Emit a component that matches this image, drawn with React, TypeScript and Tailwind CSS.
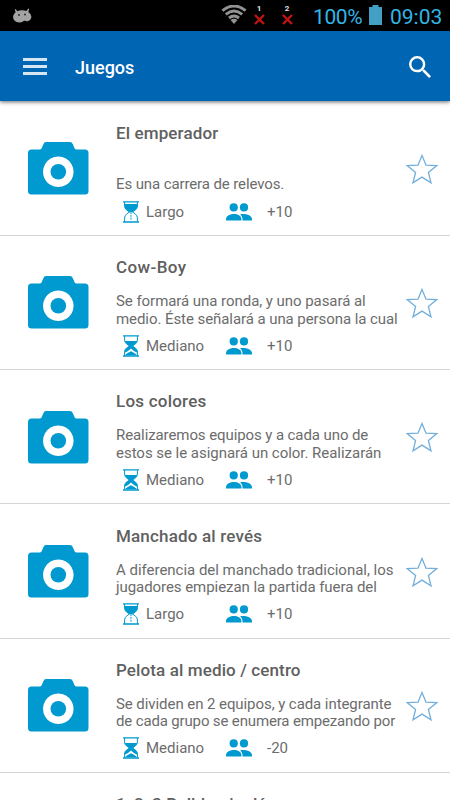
type Game = {
  title: string;
  titleSpacing: string;
  lines: { text: string; spacing: string }[];
  duration: string;
  players: string;
};

const games: Game[] = [
  { title: "El emperador", titleSpacing: "tracking-[0.120px]", lines: [{ text: "Es una carrera de relevos.", spacing: "tracking-[-0.110px]" }], duration: "Largo", players: "+10" },
  {
    title: "Cow-Boy",
    titleSpacing: "tracking-[0.400px]",
    lines: [
      { text: "Se formará una ronda, y uno pasará al", spacing: "tracking-[-0.050px]" },
      { text: "medio. Éste señalará a una persona la cual", spacing: "tracking-[-0.070px]" },
    ],
    duration: "Mediano",
    players: "+10",
  },
  {
    title: "Los colores",
    titleSpacing: "tracking-[0.220px]",
    lines: [
      { text: "Realizaremos equipos y a cada uno de", spacing: "tracking-[-0.090px]" },
      { text: "estos se le asignará un color. Realizarán", spacing: "tracking-[-0.030px]" },
    ],
    duration: "Mediano",
    players: "+10",
  },
  {
    title: "Manchado al revés",
    titleSpacing: "tracking-[0.170px]",
    lines: [
      { text: "A diferencia del manchado tradicional, los", spacing: "tracking-[-0.020px]" },
      { text: "jugadores empiezan la partida fuera del", spacing: "tracking-[-0.060px]" },
    ],
    duration: "Largo",
    players: "+10",
  },
  {
    title: "Pelota al medio / centro",
    titleSpacing: "tracking-[0.120px]",
    lines: [
      { text: "Se dividen en 2 equipos, y cada integrante", spacing: "tracking-[-0.070px]" },
      { text: "de cada grupo se enumera empezando por", spacing: "tracking-[-0.150px]" },
    ],
    duration: "Mediano",
    players: "-20",
  },
  { title: "1, 2, 3 Bulldog inglés", titleSpacing: "tracking-[0.120px]", lines: [], duration: "Largo", players: "+10" },
];

function Camera() {
  return (
    <svg className="block h-[54px] w-[61px]" viewBox="0 0 61 54" fill="#0099d0">
      <path
        fillRule="evenodd"
        d="M18 1h24q2 0 2.700 2l2 4.600q.5 1 2 1H57q3.500 0 3.500 3.500V50q0 3.500-3.500 3.500H3.500Q0 53.500 0 50V12.100Q0 8.600 3.500 8.600H11.500q1.500 0 2-1l2-4.600Q16 1 18 1ZM30.300 15.500a15.300 15.300 0 1 0 .01 0Z"
      />
      <circle cx="30.300" cy="30.800" r="7.800" />
    </svg>
  );
}

function Hourglass({ full }: { full: boolean }) {
  return (
    <svg className="block h-[22px] w-[16px]" viewBox="0 0 16 22" fill="#0099d0">
      <path d="M0 .2h16v1.400H0zM0 20.200h16v1.500H0z" />
      <path
        d="M1.600 1v4c0 3.400 3 4.600 5 6-2 1.400-5 2.600-5 6v3.800M14.400 1v4c0 3.400-3 4.600-5 6 2 1.400 5 2.600 5 6v3.800"
        fill="none"
        stroke="#0099d0"
        strokeWidth="1"
      />
      {full ? (
        <>
          <path d="M1.600 3h12.800v2c0 3.400-3 4.600-5 6H6.600c-2-1.400-5-2.600-5-6Z" />
          <path d="M8 11v8.500" stroke="#0099d0" strokeWidth="1" strokeDasharray="2 .8" />
        </>
      ) : (
        <>
          <path d="M1.900 6h12.200c-.6 2.600-3 3.700-4.700 5H6.600C4.900 9.700 2.500 8.600 1.900 6Z" />
          <path d="M6.600 11h2.800c2 1.400 5 2.600 5 6v.8c-2-.8-4-2.200-6.400-4.300-2.400 2.100-4.400 3.500-6.400 4.300V17c0-3.400 3-4.600 5-6Z" />
          <path d="M2 20.200c.8-1.600 3.500-2.300 6-4 2.500 1.700 5.200 2.400 6 4Z" />
        </>
      )}
    </svg>
  );
}

function People() {
  return (
    <svg className="block h-[18px] w-[26px]" viewBox="0 0 26 18" fill="#0099d0">
      <circle cx="7.700" cy="4.400" r="4.100" />
      <circle cx="18" cy="4.400" r="4.100" />
      <path d="M0 17.500v-1.300C0 12.500 4.500 11 8 11s7.400 1.500 7.400 5.200v1.300Z" />
      <path d="M14 11.400c4-1.200 12 .2 12 4.800v1.300h-9.500v-1.300c0-2.300-1-3.800-2.500-4.800Z" />
    </svg>
  );
}

function Star() {
  return (
    <svg className="block h-[32px] w-[32px]" viewBox="0 0 32 32" fill="none" stroke="#72afdc" strokeWidth="1.300">
      <path d="M16 2.500l4 9.700 10.600.5-8.200 6.700 2.600 10.400-9-5.700-9 5.700 2.600-10.400-8.200-6.700L12 12.200Z" />
    </svg>
  );
}

function Sim({ n }: { n: string }) {
  return (
    <div className="flex w-[12px] flex-col items-center">
      <span className="h-[9px] text-[8px] leading-[9px] font-bold text-[#e0e0e0]">{n}</span>
      <svg className="mt-[1px] block h-[11px] w-[11px]" viewBox="0 0 11 11" stroke="#c01414" strokeWidth="2.400">
        <path d="M1 1l9 9M10 1l-9 9" />
      </svg>
    </div>
  );
}

function StatusBar() {
  return (
    <div className="flex h-[31px] shrink-0 items-start bg-black">
      <svg className="mt-[8px] ml-[13px] block h-[15px] w-[19px]" viewBox="0 0 19 15" fill="#a3a3a3">
        <path d="M1.800 1.500l.9-.4 1.600 2.200Q6 2.200 9 2.200q2.500 0 4.500.9L15.300.5l.9.5-.8 3Q18.400 6 18.400 8.800c0 2.300-1.700 4.100-4 4.400-1.400.2-1.600-.5-2.800-.4-1.400.1-2.400 1.900-5.200 1.700C2.500 14.300.1 12 .1 9c0-2.100 1-3.600 2.500-4.600Z" />
        <circle cx="6" cy="7" r=".9" fill="#222" />
        <circle cx="12" cy="6.500" r=".9" fill="#222" />
      </svg>
      <svg className="mt-[5px] ml-[189px] block h-[19px] w-[26px]" viewBox="0 0 26 19" fill="none" stroke="#929292" strokeWidth="2.900">
        <path d="M1.400 5.700Q13-3.800 24.600 5.700M4.800 9.400q8.200-6.600 16.400 0M8 13q5-4 10 0" />
        <path d="M9.500 15q3.500-2.600 7 0L13 19Z" fill="#929292" stroke="none" />
      </svg>
      <div className="mt-[4px] ml-[6px] flex gap-[16px]">
        <Sim n="1" />
        <Sim n="2" />
      </div>
      <span className="mt-[5px] ml-[20px] w-[49px] text-[21px] leading-[24px] tracking-[-0.400px] whitespace-nowrap text-[#33b5e5]">100%</span>
      <svg className="mt-[5px] ml-[7px] block h-[20px] w-[13px]" viewBox="0 0 13 20" fill="#429fc5">
        <path d="M3.500 0h6v2H13v18H0V2h3.500Z" />
      </svg>
      <span className="mt-[5px] ml-[8px] text-[21px] leading-[24px] whitespace-nowrap text-[#33b5e5]">09:03</span>
    </div>
  );
}

function Row({ game }: { game: Game }) {
  return (
    <li className="flex h-[134.200px] shrink-0 border-b border-[#d4d4d4]">
      <div className="mt-[39.400px] ml-[28px] w-[88px] shrink-0">
        <Camera />
      </div>
      <div className="w-[290px] shrink-0">
        <h2 className={`mt-[19.200px] h-[24px] text-[17px] leading-[24px] font-medium whitespace-nowrap text-[#606060] ${game.titleSpacing}`}>{game.title}</h2>
        <div className="mt-[13px] flex h-[36px] flex-col justify-end text-[15px] leading-[17.500px] text-[#6c6c6c]">
          {game.lines.map((line) => (
            <p key={line.text} className={`whitespace-nowrap ${line.spacing}`}>{line.text}</p>
          ))}
        </div>
        <div className="mt-[5.600px] flex h-[24px] items-center pl-[7px] text-[15px] leading-[24px] text-[#6c6c6c]">
          <Hourglass full={game.duration === "Largo"} />
          <span className="ml-[7px] w-[80px]">{game.duration}</span>
          <People />
          <span className="ml-[15px]">{game.players}</span>
        </div>
      </div>
      <div className="mt-[51.200px]">
        <Star />
      </div>
    </li>
  );
}

export default function App() {
  return (
    <div className="flex h-[800px] w-[450px] flex-col overflow-hidden bg-white font-['Roboto','Liberation_Sans',sans-serif]">
      <StatusBar />
      <header className="z-10 flex h-[70px] shrink-0 items-center bg-[#0065b3] text-white shadow-[0_1px_4px_rgba(0,0,0,0.600)]">
        <div className="mt-[1px] ml-[23px] flex w-[24px] flex-col gap-[4px]">
          <span className="h-[3px] bg-[#d5e5f1]" />
          <span className="h-[3px] bg-[#d5e5f1]" />
          <span className="h-[3px] bg-[#d5e5f1]" />
        </div>
        <h1 className="mt-[4px] ml-[28px] flex-1 text-[18px] leading-[24px] font-medium">Juegos</h1>
        <svg className="mt-[1px] mr-[19px] block h-[22px] w-[22px]" viewBox="3 3 17.490 17.490" fill="white">
          <path d="M15.500 14h-.79l-.28-.27A6.471 6.471 0 0 0 16 9.500 6.500 6.500 0 1 0 9.500 16c1.610 0 3.090-.59 4.230-1.570l.27.28v.79l5 4.990L20.490 19l-4.990-5zm-6 0C7.010 14 5 11.990 5 9.500S7.010 5 9.500 5 14 7.010 14 9.500 11.990 14 9.500 14z" />
        </svg>
      </header>
      <ul className="flex min-h-0 flex-1 flex-col overflow-hidden pt-[0.800px]">
        {games.map((game) => (
          <Row key={game.title} game={game} />
        ))}
      </ul>
    </div>
  );
}
